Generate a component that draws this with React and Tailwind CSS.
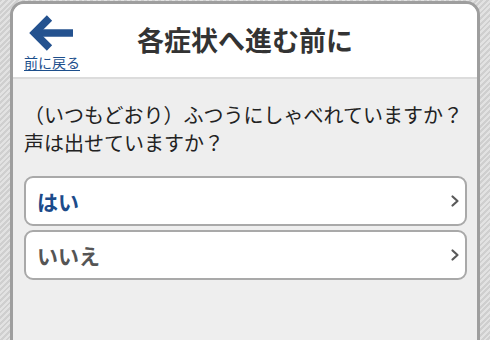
import React from "react";

function Chevron() {
  return (
    <svg width="10" height="14" viewBox="0 0 10 14" className="shrink-0">
      <path d="M2.5 2.5 L7.5 7 L2.5 11.5" fill="none" stroke="#5a5a5a" strokeWidth="2.2" strokeLinecap="round" strokeLinejoin="round" />
    </svg>
  );
}

function Choice({ label, color }) {
  return (
    <button className="flex h-[50px] w-full items-center justify-between rounded-[9px] border-2 border-[#a9a9a9] bg-white pl-[11px] pr-[5px] text-left">
      <span className="text-[21px] font-bold leading-none" style={{ color }}>{label}</span>
      <Chevron />
    </button>
  );
}

export default function App() {
  return (
    <div
      className="h-[340px] w-[490px] overflow-hidden bg-[repeating-linear-gradient(135deg,#cfcfcf_0px,#cfcfcf_2px,#e2e2e2_2px,#e2e2e2_4px)] pl-[10px] pr-[10px] pt-px"
      style={{ fontFamily: '"Noto Sans CJK JP", "Noto Sans", sans-serif' }}
    >
      <div className="flex h-[360px] flex-col overflow-hidden rounded-t-[14px] border-[3px] border-[#9e9e9e] bg-[#eeeeee]">
        <header className="grid h-[75px] grid-cols-[1fr_auto_1fr] items-center border-b-2 border-[#dcdcdc] bg-white">
          <div className="flex flex-col items-start self-start pl-[11px] pt-[11px]">
            <div className="flex w-[56px] justify-center">
              <svg width="46" height="36" viewBox="0 0 46 36">
                <path d="M44 18 H10" fill="none" stroke="#24528f" strokeWidth="7.5" />
                <path d="M20.5 3 L5.5 18 L20.5 33" fill="none" stroke="#24528f" strokeWidth="7.5" strokeLinecap="butt" strokeLinejoin="miter" />
              </svg>
            </div>
            <a className="mt-[3px] text-[14px] leading-[16px] text-[#1d4f8c] underline underline-offset-2">前に戻る</a>
          </div>
          <h1 className="text-[27px] font-bold text-[#333333]">各症状へ進む前に</h1>
          <div />
        </header>
        <main className="flex flex-col px-[11px] pr-[10px] pt-[22px]">
          <p className="text-[20px] leading-[28px] text-[#222222]">
            （いつもどおり）ふつうにしゃべれていますか？<br />声は出せていますか？
          </p>
          <div className="mt-[19px] flex flex-col gap-[4px]">
            <Choice label="はい" color="#1c4b8a" />
            <Choice label="いいえ" color="#555555" />
          </div>
        </main>
      </div>
    </div>
  );
}
